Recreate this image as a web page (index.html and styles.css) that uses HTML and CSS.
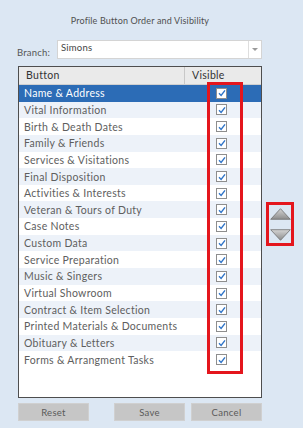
FILE: index.html
```html
<!DOCTYPE html>
<html lang="en">

<head>
    <meta charset="UTF-8">
    <meta name="viewport" content="width=device-width, initial-scale=1.0">
    <title>Profile Button Order and Visibility</title>
    <link rel="stylesheet" href="styles.css">
</head>

<body>
    <div class="dialog">
        <div class="main">
            <h1>Profile Button Order and Visibility</h1>

            <div class="branch">
                <label for="branch">Branch:</label>
                <div class="select">
                    <span class="select-value">Simons</span>
                    <span class="select-arrow"></span>
                </div>
            </div>

            <div class="grid">
                <div class="grid-head">
                    <div class="col-name">Button</div>
                    <div class="col-visible">Visible</div>
                </div>
                <div class="grid-body" id="rows"></div>
                <div class="highlight"></div>
            </div>

            <div class="actions">
                <button class="btn">Reset</button>
                <div class="actions-right">
                    <button class="btn">Save</button>
                    <button class="btn">Cancel</button>
                </div>
            </div>
        </div>

        <div class="side">
            <div class="arrows">
                <svg width="21" height="12" viewBox="0 0 21 12">
                    <defs>
                        <linearGradient id="gUp" x1="0" y1="0" x2="0" y2="1">
                            <stop offset="0" stop-color="#d4d4d4" />
                            <stop offset="1" stop-color="#8c8c8c" />
                        </linearGradient>
                    </defs>
                    <polygon points="10.5,0.7 20.3,11.3 0.7,11.3" fill="url(#gUp)" stroke="#6e6e6e" stroke-width="0.8" />
                </svg>
                <svg width="21" height="12" viewBox="0 0 21 12">
                    <defs>
                        <linearGradient id="gDown" x1="0" y1="0" x2="0" y2="1">
                            <stop offset="0" stop-color="#d4d4d4" />
                            <stop offset="1" stop-color="#8c8c8c" />
                        </linearGradient>
                    </defs>
                    <polygon points="0.7,0.7 20.3,0.7 10.5,11.3" fill="url(#gDown)" stroke="#6e6e6e" stroke-width="0.8" />
                </svg>
            </div>
        </div>
    </div>

    <script>
        // Profile buttons, in display order
        const buttons = [
            "Name & Address", "Vital Information", "Birth & Death Dates", "Family & Friends",
            "Services & Visitations", "Final Disposition", "Activities & Interests",
            "Veteran & Tours of Duty", "Case Notes", "Custom Data", "Service Preparation",
            "Music & Singers", "Virtual Showroom", "Contract & Item Selection",
            "Printed Materials & Documents", "Obituary & Letters", "Forms & Arrangment Tasks"
        ];

        const check = '<svg width="8" height="8" viewBox="0 0 8 8"><path d="M1 4.3 L3.1 6.4 L7 1.4" fill="none" stroke="#2f74c8" stroke-width="1.4"/></svg>';

        const rows = document.getElementById("rows");
        buttons.forEach((name, i) => {
            const row = document.createElement("div");
            row.className = "row" + (i === 0 ? " selected" : "") + (i % 2 === 1 ? " alt" : "");
            row.innerHTML = `<div class="col-name"></div><div class="col-visible"><span class="box">${check}</span></div>`;
            row.querySelector(".col-name").textContent = name;
            rows.appendChild(row);
        });
    </script>
</body>

</html>
```

FILE: styles.css
```css
body {
    font-family: 'Lato', sans-serif;
    background: #dce7f3;
    margin: 0;
    color: #5e5e5e;
}

.dialog {
    display: flex;
    padding: 14px 0 0 18px;
}

.main {
    width: 244px;
}

h1 {
    font-size: 9px;
    font-weight: normal;
    text-align: center;
    color: #505050;
    margin: 0;
    height: 13px;
    line-height: 13px;
    letter-spacing: 0.15px;
}

.branch {
    display: flex;
    align-items: flex-end;
    margin: 13px 0 0 -1px;
}

.branch label {
    font-size: 9.5px;
    color: #555;
    width: 40px;
    line-height: 12px;
    letter-spacing: 0.2px;
}

.select {
    flex: 1;
    height: 17px;
    background: white;
    border: 1px solid #d4d4d4;
    display: flex;
    align-items: center;
}

.select-value {
    flex: 1;
    font-size: 9.5px;
    color: #444;
    padding-left: 3px;
    margin-top: -4px;
    letter-spacing: 0.2px;
}

.select-arrow {
    width: 12px;
    height: 100%;
    border-left: 1px solid #dedede;
    display: flex;
    justify-content: center;
    align-items: center;
}

.select-arrow::after {
    content: "";
    border-left: 3px solid transparent;
    border-right: 3px solid transparent;
    border-top: 3px solid #9a9a9a;
}

.grid {
    position: relative;
    margin-top: 7px;
    height: 330px;
    background: white;
    border: 1px solid #4e4e4e;
}

.grid-head {
    display: flex;
    height: 17px;
    background: #eaeaea;
    border-bottom: 1px solid #d0d0d0;
    font-size: 10.5px;
    color: #333;
}

.grid-head .col-name {
    border-right: 1px solid #c8c8c8;
    padding-left: 7px;
}

.grid-head .col-visible {
    padding-left: 7px;
}

.grid-head div {
    line-height: 17px;
    letter-spacing: 0.3px;
}

.col-name {
    width: 158px;
    padding-left: 5px;
    white-space: nowrap;
}

.col-visible {
    flex: 1;
}

.row {
    display: flex;
    height: 16.65px;
    align-items: center;
    font-size: 10.5px;
    letter-spacing: 0.3px;
}

.row.alt {
    background: #edf2f9;
}

.row.selected {
    background: #2c6cb6;
    color: white;
}

.row .col-visible {
    display: flex;
    justify-content: center;
}

.box {
    width: 9px;
    height: 9px;
    border: 1px solid #8e8e8e;
    background: white;
    display: flex;
    justify-content: center;
    align-items: center;
}

.highlight {
    position: absolute;
    left: 188px;
    top: 15px;
    width: 30px;
    height: 286px;
    border: 3px solid #e4161d;
}

.actions {
    display: flex;
    justify-content: space-between;
    margin-top: 5px;
}

.actions-right {
    display: flex;
    gap: 6px;
}

.btn {
    width: 71px;
    height: 18px;
    background: #c6c6c6;
    border: 1px solid #d0d0d0;
    font-family: 'Lato', sans-serif;
    font-size: 9.5px;
    letter-spacing: 0.3px;
    color: #5a5a5a;
    padding: 0;
}

.side {
    padding: 188px 0 0 4px;
}

.arrows {
    width: 22px;
    height: 38px;
    border: 3px solid #e4161d;
    display: flex;
    flex-direction: column;
    align-items: center;
    justify-content: center;
    gap: 9px;
}

.arrows svg {
    display: block;
}
```
